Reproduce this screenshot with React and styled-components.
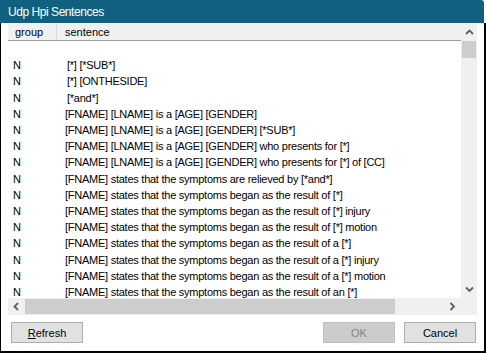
import styled, { createGlobalStyle } from "styled-components";

const GlobalStyle = createGlobalStyle`
  html, body {
    margin: 0;
    padding: 0;
    background: #ffffff;
  }
`;

const rows = [
  "",
  "[*] [*SUB*]",
  "[*] [ONTHESIDE]",
  "[*and*]",
  "[FNAME] [LNAME] is a [AGE] [GENDER]",
  "[FNAME] [LNAME] is a [AGE] [GENDER] [*SUB*]",
  "[FNAME] [LNAME] is a [AGE] [GENDER] who presents for [*]",
  "[FNAME] [LNAME] is a [AGE] [GENDER] who presents for [*] of [CC]",
  "[FNAME] states that the symptoms are relieved by [*and*]",
  "[FNAME] states that the symptoms began as the result of [*]",
  "[FNAME] states that the symptoms began as the result of [*] injury",
  "[FNAME] states that the symptoms began as the result of [*] motion",
  "[FNAME] states that the symptoms began as the result of a [*]",
  "[FNAME] states that the symptoms began as the result of a [*] injury",
  "[FNAME] states that the symptoms began as the result of a [*] motion",
  "[FNAME] states that the symptoms began as the result of an [*]",
];

function Chevron({ dir }) {
  const paths = {
    up: "M1 5 L4.5 1.5 L8 5",
    down: "M1 1.5 L4.5 5 L8 1.5",
    left: "M5 1 L1.5 4.5 L5 8",
    right: "M1.5 1 L5 4.5 L1.5 8",
  };
  const horizontal = dir === "left" || dir === "right";
  return (
    <svg
      width={horizontal ? 7 : 9}
      height={horizontal ? 9 : 7}
      viewBox={horizontal ? "0 0 7 9" : "0 0 9 7"}
    >
      <path d={paths[dir]} fill="none" stroke="#606060" strokeWidth="1.8" />
    </svg>
  );
}

export default function App() {
  return (
    <>
      <GlobalStyle />
      <Window>
        <TitleBar>Udp Hpi Sentences</TitleBar>
        <Body>
          <ListView>
            <ListMain>
              <Header>
                <HeaderCell width="49px">group</HeaderCell>
                <HeaderCell>sentence</HeaderCell>
              </Header>
              <Rows>
                {rows.map((text, i) => (
                  <Row key={i}>
                    <GroupCell>{text ? "N" : ""}</GroupCell>
                    <SentenceCell indent={i > 0 && i < 4}>{text}</SentenceCell>
                  </Row>
                ))}
              </Rows>
            </ListMain>
            <VScroll>
              <ArrowBox>
                <Chevron dir="up" />
              </ArrowBox>
              <VThumb />
              <VTrack />
              <ArrowBox>
                <Chevron dir="down" />
              </ArrowBox>
            </VScroll>
            <HScroll>
              <ArrowBox>
                <Chevron dir="left" />
              </ArrowBox>
              <HThumb />
              <HTrack />
              <ArrowBox>
                <Chevron dir="right" />
              </ArrowBox>
            </HScroll>
            <Corner />
          </ListView>
          <Footer>
            <Button>
              <u>R</u>efresh
            </Button>
            <Spacer />
            <Button disabled>OK</Button>
            <Button>Cancel</Button>
          </Footer>
        </Body>
      </Window>
    </>
  );
}

const Window = styled.div`
  width: 486px;
  height: 353px;
  display: flex;
  flex-direction: column;
  box-sizing: border-box;
  background: #ffffff;
  font-family: "Liberation Sans", Arial, sans-serif;
  font-size: 11px;
  color: #000000;
`;

const TitleBar = styled.div`
  height: 23px;
  flex-shrink: 0;
  display: flex;
  align-items: center;
  padding-left: 8px;
  margin-right: 2px;
  background: #10607f;
  color: #ffffff;
  font-family: "Liberation Sans", Arial, sans-serif;
  font-size: 12px;
  letter-spacing: -0.45px;
  border-top-right-radius: 3px;
`;

const Body = styled.div`
  flex: 1;
  display: flex;
  flex-direction: column;
  box-sizing: border-box;
  border-left: 1px solid #000000;
  border-right: 2px solid #000000;
  border-bottom: 2px solid #000000;
  padding: 1px 7px 0 7px;
`;

const ListView = styled.div`
  height: 291px;
  display: grid;
  grid-template-columns: 1fr 16px;
  grid-template-rows: 1fr 17px;
  overflow: hidden;
`;

const ListMain = styled.div`
  display: flex;
  flex-direction: column;
  overflow: hidden;
`;

const Header = styled.div`
  height: 17px;
  flex-shrink: 0;
  display: flex;
  background: #f0f0f0;
  border-bottom: 1px solid #a0a0a0;
  box-sizing: border-box;
`;

const HeaderCell = styled.div`
  width: ${(p) => p.width || "auto"};
  flex: ${(p) => (p.width ? "none" : "1")};
  display: flex;
  align-items: center;
  padding-left: ${(p) => (p.width ? "7px" : "8px")};
  box-sizing: border-box;
  border-right: ${(p) => (p.width ? "1px solid #d9d9d9" : "none")};
  white-space: nowrap;
`;

const Rows = styled.div`
  display: flex;
  flex-direction: column;
  letter-spacing: -0.25px;
`;

const Row = styled.div`
  height: 16.2px;
  display: flex;
  align-items: center;
  white-space: nowrap;
  flex-shrink: 0;
`;

const GroupCell = styled.div`
  width: 49px;
  flex: none;
  padding-left: 5px;
  box-sizing: border-box;
`;

const SentenceCell = styled.div`
  padding-left: ${(p) => (p.indent ? "10px" : "8px")};
`;

const VScroll = styled.div`
  grid-row: 1;
  grid-column: 2;
  display: flex;
  flex-direction: column;
  background: #f0f0f0;
`;

const HScroll = styled.div`
  grid-row: 2;
  grid-column: 1;
  display: flex;
  background: #f0f0f0;
`;

const ArrowBox = styled.div`
  width: 17px;
  height: 17px;
  flex: none;
  display: flex;
  align-items: center;
  justify-content: center;
`;

const VThumb = styled.div`
  height: 17px;
  flex: none;
  margin: 0 1px;
  background: #cdcdcd;
`;

const VTrack = styled.div`
  flex: 1;
`;

const HThumb = styled.div`
  width: 370px;
  flex: none;
  margin: 1px 0;
  background: #cdcdcd;
`;

const HTrack = styled.div`
  flex: 1;
`;

const Corner = styled.div`
  grid-row: 2;
  grid-column: 2;
  background: #f0f0f0;
`;

const Footer = styled.div`
  display: flex;
  gap: 9px;
  margin-top: 7px;
  padding-left: 3px;
  padding-right: 1px;
`;

const Spacer = styled.div`
  flex: 1;
`;

const Button = styled.div`
  width: 72px;
  height: 21px;
  box-sizing: border-box;
  display: flex;
  align-items: center;
  justify-content: center;
  background: ${(p) => (p.disabled ? "#cccccc" : "#e1e1e1")};
  border: 1px solid ${(p) => (p.disabled ? "#bfbfbf" : "#adadad")};
  color: ${(p) => (p.disabled ? "#838383" : "#000000")};
  font-size: 11px;
`;
